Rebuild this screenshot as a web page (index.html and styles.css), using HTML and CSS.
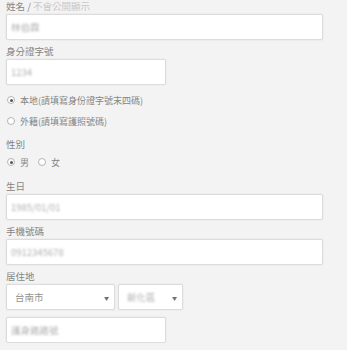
FILE: index.html
```html
<!DOCTYPE html>
<html lang="zh-Hant">
<head>
<meta charset="utf-8">
<link rel="stylesheet" href="styles.css">
</head>
<body>
<form class="form">
  <div class="label first">姓名 / <span class="hint">不會公開顯示</span></div>
  <div class="field wide"><span class="blur">林伯霖</span></div>

  <div class="label">身分證字號</div>
  <div class="field short"><span class="blur">1234</span></div>

  <div class="radio-row r1"><span class="radio on"></span><span class="rtext">本地(請填寫身份證字號末四碼)</span></div>
  <div class="radio-row r2"><span class="radio"></span><span class="rtext">外籍(請填寫護照號碼)</span></div>

  <div class="label sex">性別</div>
  <div class="radio-row inline"><span class="radio on"></span><span class="rtext">男</span><span class="radio second"></span><span class="rtext">女</span></div>

  <div class="label bday">生日</div>
  <div class="field wide"><span class="blur">1985/01/01</span></div>

  <div class="label">手機號碼</div>
  <div class="field wide"><span class="blur">0912345678</span></div>

  <div class="label">居住地</div>
  <div class="selects">
    <div class="select city"><span class="stext">台南市</span><span class="arrow">▼</span></div>
    <div class="select dist"><span class="blur">新化區</span><span class="arrow">▼</span></div>
  </div>
  <div class="field short addr"><span class="blur">護身路路號</span></div>
</form>
</body>
</html>
```

FILE: styles.css
```css
html, body {
  margin: 0;
  padding: 0;
  background: #f3f3f3;
}
body {
  font-family: "Noto Sans CJK TC", "Noto Sans", sans-serif;
  color: #858585;
  font-size: 9.5px;
}
.form {
  display: flex;
  flex-direction: column;
  align-items: flex-start;
  padding-left: 6px;
}
.label {
  line-height: 13px;
  height: 13px;
  margin-top: 5px;
  margin-bottom: 1px;
  white-space: nowrap;
}
.label.first {
  margin-top: 0;
}
.hint {
  color: #c8c8c8;
}
.field, .select {
  box-sizing: border-box;
  height: 26px;
  background: #fff;
  border: 1px solid #dcdcdc;
  border-radius: 2px;
  box-shadow: 0 0 0 1px #ededed;
  display: flex;
  align-items: center;
}
.field.wide { width: 317px; }
.field.short { width: 160px; }
.blur {
  color: #b0b0b0;
  filter: blur(1.3px);
  padding-left: 4px;
  font-size: 9.5px;
}
.radio-row {
  display: flex;
  align-items: center;
  height: 14px;
  font-size: 9px;
  white-space: nowrap;
}
.radio-row.r1 { margin-top: 8px; }
.radio-row.r2 { margin-top: 7px; }
.label.sex { margin-top: 10px; }
.radio-row.inline { margin-top: 3px; }
.label.bday { margin-top: 11px; }
.radio {
  box-sizing: border-box;
  width: 8px;
  height: 8px;
  border: 1px solid #b4b4b4;
  border-radius: 50%;
  background: #fff;
  margin-left: 1px;
  margin-right: 5px;
  position: relative;
}
.radio.on::after {
  content: "";
  position: absolute;
  left: 1.5px;
  top: 1.5px;
  width: 3px;
  height: 3px;
  border-radius: 50%;
  background: #555;
}
.radio.second {
  margin-left: 9px;
}
.rtext {
  color: #858585;
}
.selects {
  display: flex;
  gap: 3px;
}
.select {
  justify-content: space-between;
  padding-right: 5px;
}
.select.city { width: 109px; padding-left: 8px; }
.select.dist { width: 65px; padding-left: 4px; }
.stext { color: #929292; }
.arrow {
  font-size: 5px;
  color: #707070;
}
.field.addr {
  margin-top: 7px;
}
```
